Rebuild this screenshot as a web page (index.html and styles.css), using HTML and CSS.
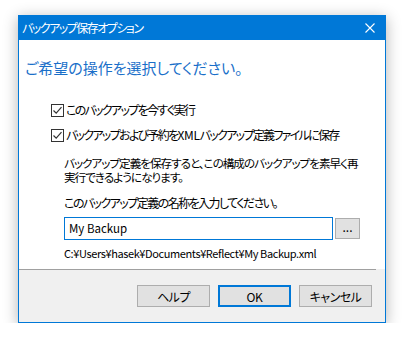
FILE: index.html
```html
<!DOCTYPE html>
<html lang="ja">
<head>
    <meta charset="UTF-8">
    <title>バックアップ保存オプション</title>
    <link rel="stylesheet" href="styles.css">
</head>
<body>
    <div class="window">
        <div class="titlebar">
            <span class="title">バックアップ保存オプション</span>
            <svg class="close" width="10" height="10" viewBox="0 0 10 10">
                <path d="M0.5 0.5 L9.5 9.5 M9.5 0.5 L0.5 9.5" stroke="#fff" stroke-width="1.1" fill="none"/>
            </svg>
        </div>

        <div class="content">
            <h1 class="heading">ご希望の操作を選択してください。</h1>

            <div class="options">
                <label class="check-row row-first">
                    <span class="checkbox">
                        <svg width="11" height="11" viewBox="0 0 11 11"><path d="M1.5 5.5 L4.2 8.2 L9.5 2.2" stroke="#333" stroke-width="1.2" fill="none"/></svg>
                    </span>
                    <span class="jp">このバックアップを今すぐ実行</span>
                </label>
                <label class="check-row">
                    <span class="checkbox">
                        <svg width="11" height="11" viewBox="0 0 11 11"><path d="M1.5 5.5 L4.2 8.2 L9.5 2.2" stroke="#333" stroke-width="1.2" fill="none"/></svg>
                    </span>
                    <span class="jp">バックアップおよび予約を<span class="latin">XML</span>バックアップ定義ファイルに保存</span>
                </label>
            </div>

            <div class="details">
                <p class="desc jp">バックアップ定義を保存すると、この構成のバックアップを素早く再<br>実行できるようになります。</p>
                <p class="name-label jp">このバックアップ定義の名称を入力してください。</p>
                <div class="name-row">
                    <div class="name-input latin">My Backup</div>
                    <div class="browse">...</div>
                </div>
                <p class="path latin">C:¥Users¥hasek¥Documents¥Reflect¥My Backup.xml</p>
            </div>
        </div>

        <div class="separator"></div>

        <div class="footer">
            <button class="btn jp">ヘルプ</button>
            <button class="btn btn-default latin">OK</button>
            <button class="btn jp">キャンセル</button>
        </div>
    </div>
</body>
</html>
```

FILE: styles.css
```css
/* --- General --- */
body {
    margin: 0;
    background-color: #ffffff;
    font-family: "Noto Sans CJK JP", sans-serif;
    font-feature-settings: "palt";
    font-size: 12px;
    color: #000;
}

.jp {
    letter-spacing: -1.7px;
    white-space: nowrap;
}

.latin {
    font-size: 11.5px;
    letter-spacing: -0.3px;
    white-space: nowrap;
}

.window {
    margin: 15px 0 0 18px;
    width: 368px;
    height: 308px;
    box-sizing: border-box;
    border: 1px solid #0078d7;
    border-top: none;
    background-color: #f0f0f0;
    box-shadow: 0 3px 14px rgba(0, 0, 0, 0.3);
    display: flex;
    flex-direction: column;
}

/* --- Title bar --- */
.titlebar {
    height: 25px;
    background-color: #0078d7;
    display: flex;
    align-items: center;
    justify-content: space-between;
    padding: 0 10px 0 3px;
    color: #fff;
}

.title {
    font-size: 12px;
    letter-spacing: -1.5px;
}

/* --- Content --- */
.content {
    height: 229px;
    box-sizing: border-box;
    background-color: #fff;
    padding: 18px 0 0 6px;
}

.heading {
    margin: 0;
    font-size: 15px;
    font-weight: normal;
    line-height: 20px;
    color: #1a6fc9;
}

.options {
    margin-left: 26px;
}

.check-row {
    display: flex;
    align-items: center;
    gap: 2px;
    height: 16px;
    line-height: 16px;
    margin-top: 9px;
}

.check-row.row-first {
    margin-top: 24px;
}

.check-row .latin {
    font-size: 12px;
}

.checkbox {
    width: 11px;
    height: 11px;
    border: 1px solid #333;
    background-color: #fff;
    display: flex;
}

.details {
    margin-left: 39px;
}

.desc {
    margin: 13px 0 0;
    font-size: 11.6px;
    line-height: 14px;
    letter-spacing: -1px;
}

.name-label {
    margin: 12px 0 0;
    line-height: 14px;
    letter-spacing: -1.55px;
}

.name-row {
    display: flex;
    align-items: center;
    gap: 2px;
    margin-top: 7px;
}

.name-input {
    width: 269px;
    height: 23px;
    box-sizing: border-box;
    border: 1px solid #0078d7;
    padding-left: 4px;
    line-height: 21px;
    letter-spacing: 0;
}

.browse {
    width: 25px;
    height: 21px;
    box-sizing: border-box;
    border: 1px solid #adadad;
    background-color: #e1e1e1;
    text-align: center;
    line-height: 16px;
}

.path {
    margin: 6px 0 0;
    font-size: 11px;
    letter-spacing: -0.4px;
    line-height: 14px;
}

.separator {
    width: 357px;
    height: 1px;
    background-color: #a0a0a0;
}

/* --- Footer --- */
.footer {
    flex: 1;
    display: flex;
    justify-content: flex-end;
    align-items: flex-start;
    gap: 8px;
    padding: 15px 13px 0 0;
}

.btn {
    width: 73px;
    height: 22px;
    box-sizing: border-box;
    margin: 0;
    padding: 0;
    border: 1px solid #adadad;
    background-color: #e1e1e1;
    font-family: inherit;
    font-feature-settings: "palt";
    font-size: 12px;
    color: #000;
}

.btn.jp {
    letter-spacing: -0.5px;
}

.btn-default {
    border: 2px solid #0078d7;
}
```
